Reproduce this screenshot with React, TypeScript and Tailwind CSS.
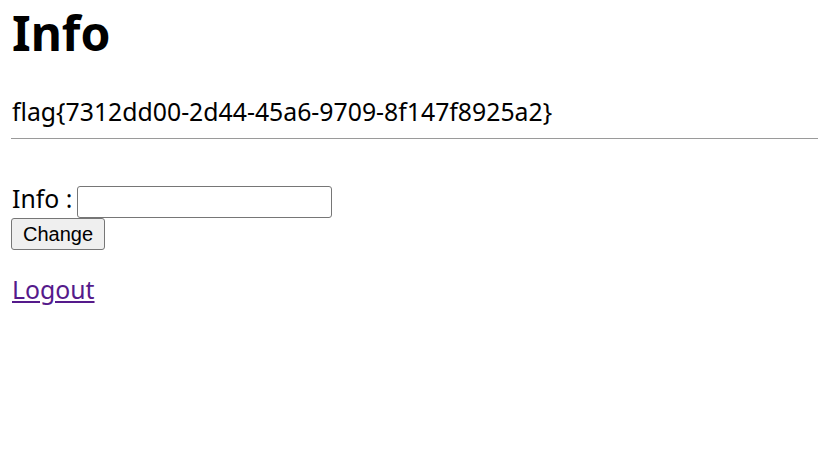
export default function App() {
  return (
    <div className="pl-[12px] pt-0 font-['Noto_Sans',sans-serif] text-[24.8px] text-black bg-white min-h-[450px]">
      <h1 className="text-[48px] font-bold leading-[66px]">Info</h1>
      <p className="mt-[29px] leading-[32px]">flag{"{"}7312dd00-2d44-45a6-9709-8f147f8925a2{"}"}</p>
      <hr className="mt-[11px] border-0 border-t border-[#9a9a9a] ml-[-1px]" />
      <form className="mt-[47px]" onSubmit={e => e.preventDefault()}>
        <div className="flex items-center h-[32px]">
          <label htmlFor="info" className="leading-[24px] mb-[8px]">Info :</label>
          <input
            id="info"
            type="text"
            className="ml-[5px] w-[255px] h-[32px] border border-[#767676] rounded-[3px] bg-white px-1 text-[20px]"
          />
        </div>
        <button
          type="submit"
          className="block mt-0 ml-[-1px] h-[32px] px-[11px] border border-[#767676] rounded-[3px] bg-[#efefef] font-['Liberation_Sans',Arial,sans-serif] text-[20px] leading-none"
        >
          Change
        </button>
      </form>
      <p className="mt-[23px] leading-[32px]">
        <a href="#" className="text-[#551a8b] underline">Logout</a>
      </p>
    </div>
  );
}
